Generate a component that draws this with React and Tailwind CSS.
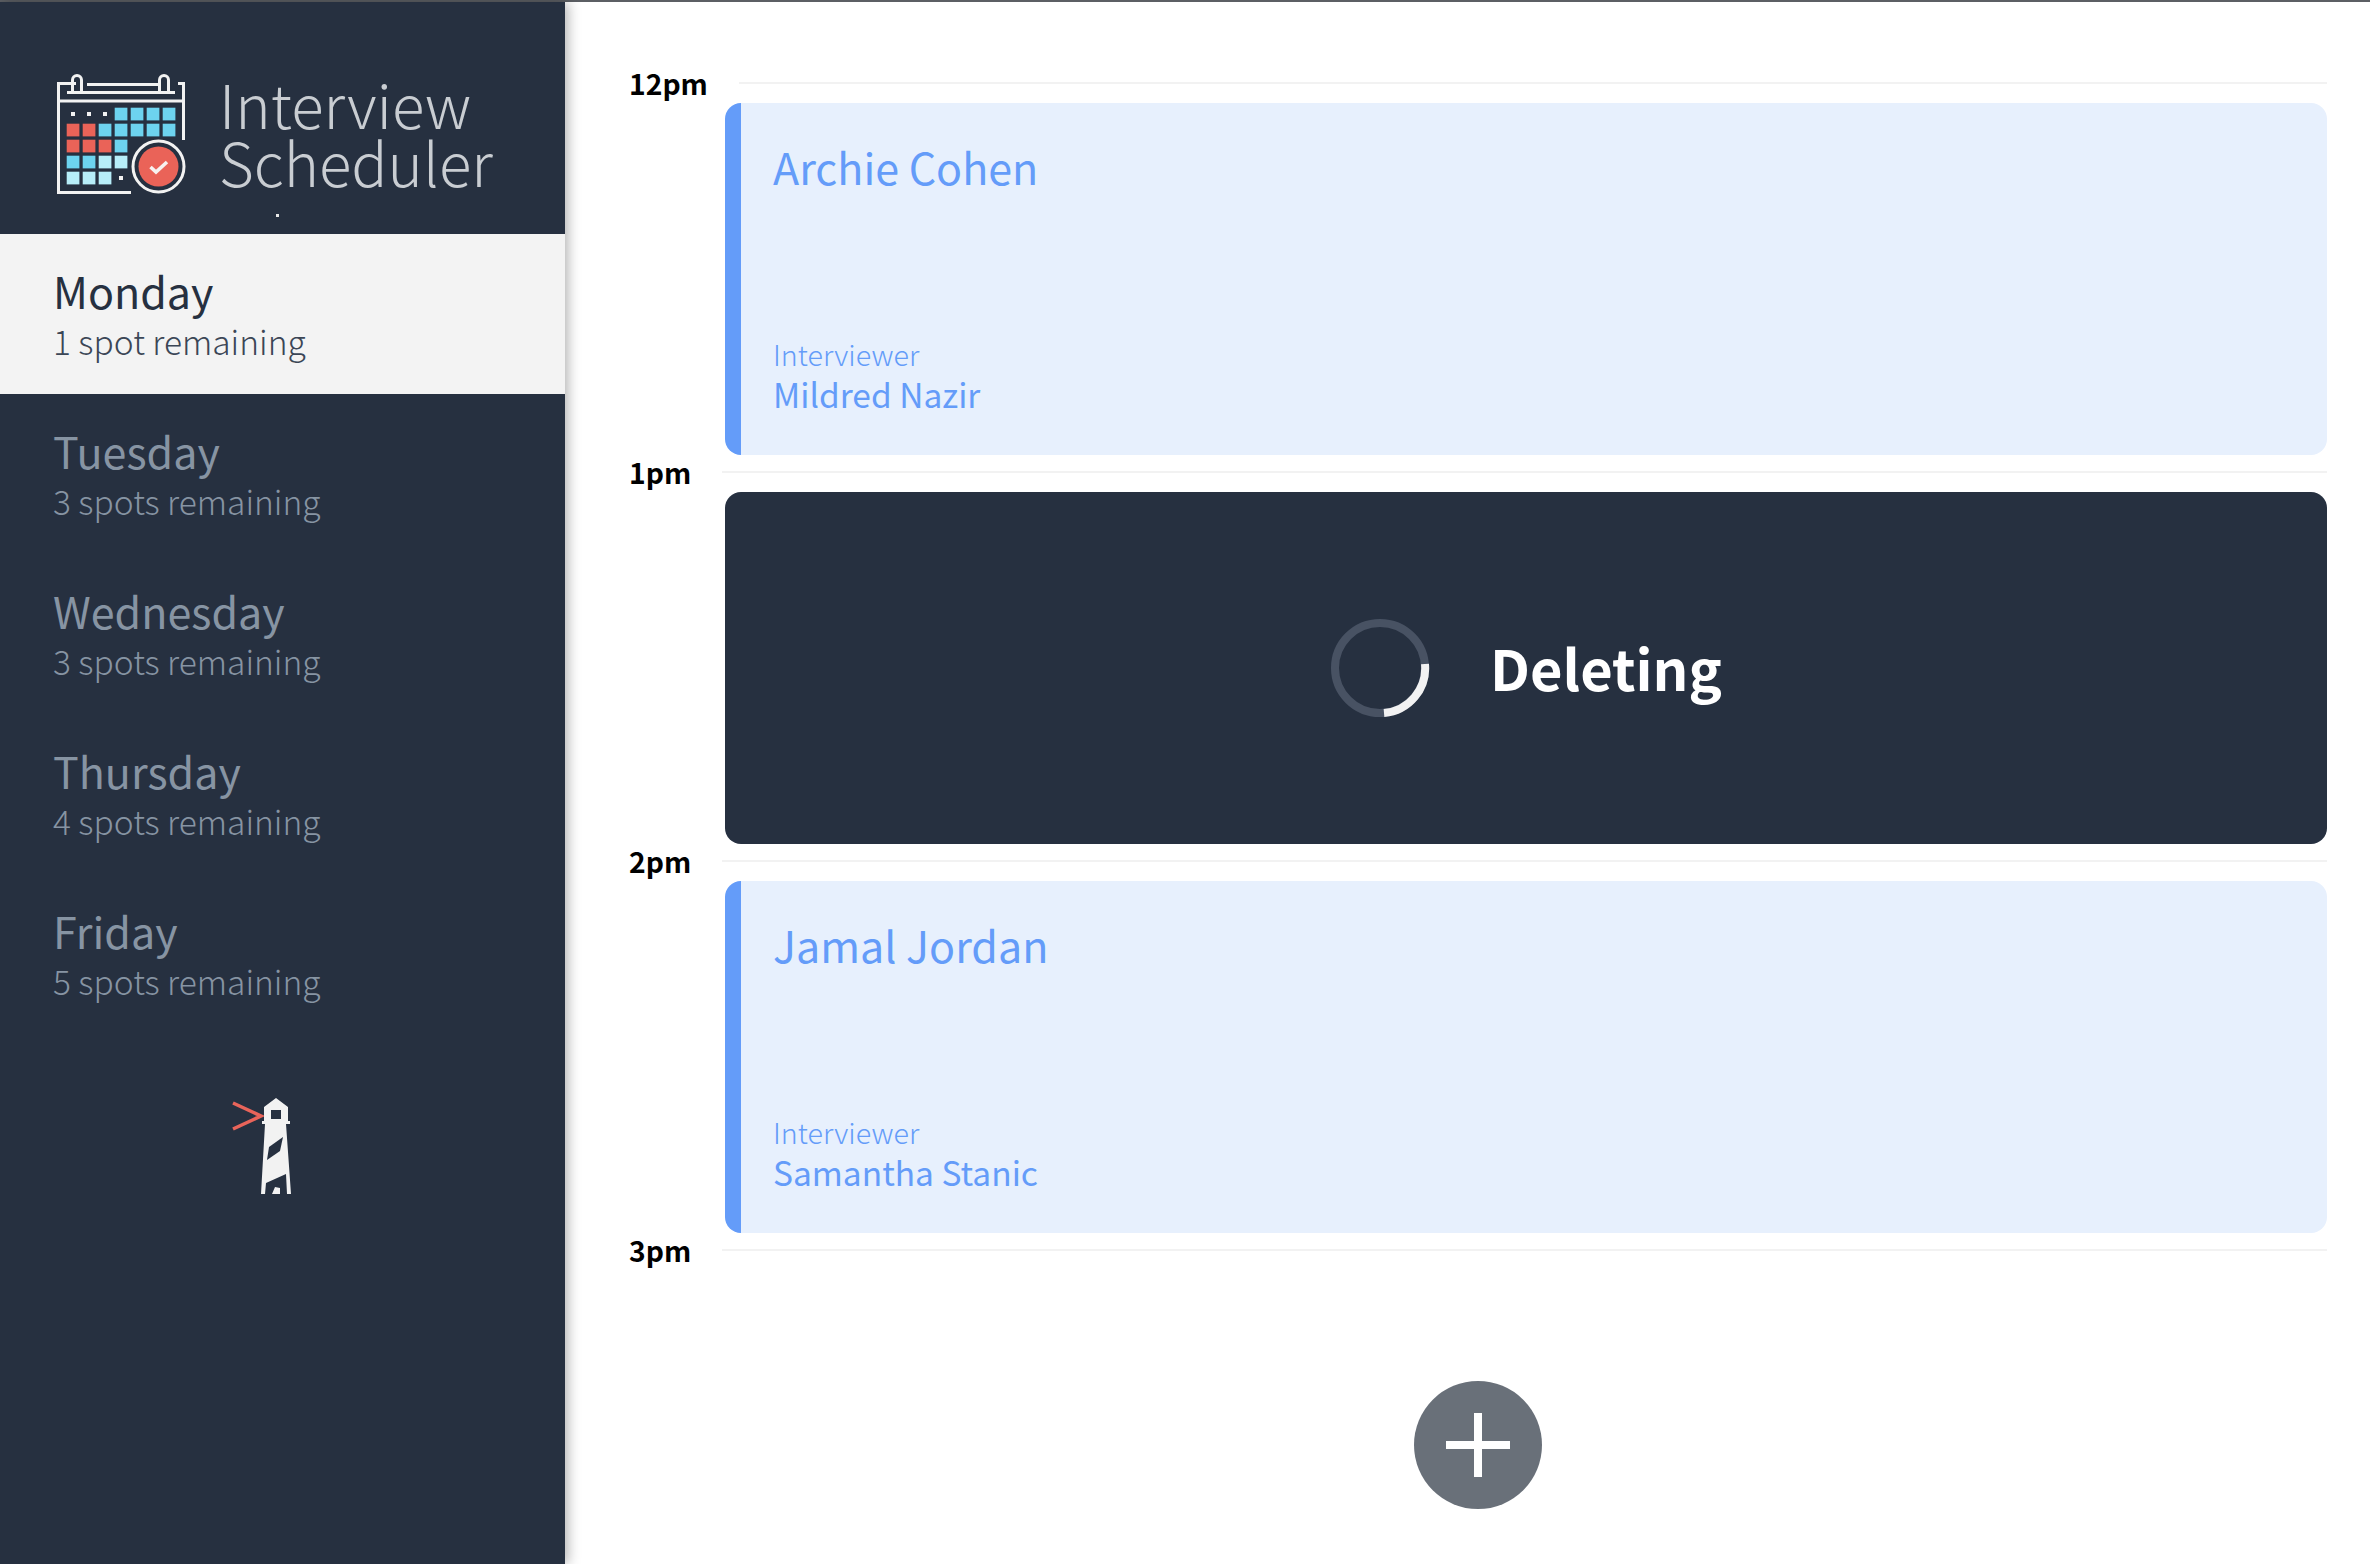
const FONT = 'font-["Noto_Sans_CJK_JP","Noto_Sans_CJK_SC",sans-serif]';

function CalendarLogo() {
  const xs = [26.7, 42.7, 58.7, 74.7, 90.7, 106.7, 122.7];
  const ys = [47.7, 63.7, 79.7, 95.7, 111.7];
  const blue = "#6dd3ef", red = "#ea6358", light = "#b7eef9";
  const cells = [
    [null, null, null, blue, blue, blue, blue],
    [red, red, blue, blue, blue, blue, blue],
    [red, red, red, blue],
    [blue, blue, light, light],
    [light, light, light, null],
  ];
  const dots = [[33, 54], [49, 54], [65, 54], [81, 118]];
  return (
    <svg viewBox="17 14 130 122" className="w-[130px] h-[122px] shrink-0">
      <g fill="none" stroke="#f2f2f2" strokeWidth="3">
        <path d="M36 23.5H18.5V132.5H91" />
        <path d="M18.5 41H143.500M143.500 80V23.500H138M47 24.500H120M27 32.500H135" />
        <path d="M32.500 31V20a4.500 4.500 0 0 1 9 0V31" />
        <path d="M119.500 31V20a4.500 4.500 0 0 1 9 0V31" />
        <circle cx="118.500" cy="106.500" r="25.500" />
      </g>
      {cells.map((row, r) =>
        row.map((c, i) => (c ? <rect key={r + "-" + i} x={xs[i]} y={ys[r]} width="12.700" height="12.700" fill={c} /> : null))
      )}
      {dots.map(([x, y]) => (
        <rect key={x + "-" + y} x={x - 2} y={y - 2} width="4" height="4" fill="#f2f2f2" />
      ))}
      <circle cx="118.500" cy="106.500" r="20" fill={red} />
      <path d="M110.500 107l5.500 5 11-10" fill="none" stroke="#f7f2f0" strokeWidth="3.600" />
    </svg>
  );
}

function Lighthouse() {
  return (
    <svg viewBox="30 25 64 102" className="w-[64px] h-[102px]">
      <path d="M33 33L61 46L33 59" fill="none" stroke="#e9645a" strokeWidth="3.500" />
      <path
        fillRule="evenodd"
        fill="#f2f2f2"
        d="M76 28L88 37V51H90V54H86L91 124H61L65 54H62V51H64V37ZM71 40V49H81V40Z"
      />
      <path fill="#263040" d="M69 77L83 67L80 81L67 90Z" />
      <path fill="#263040" d="M66 113L86 104L87 124H80V118L75 117L72 124H65Z" />
    </svg>
  );
}

function Day({ name, spots, selected }) {
  return (
    <div className={`h-[160px] pl-[53px] pt-[30px] ${selected ? "bg-[#f3f3f3] text-[#263040]" : "text-[#8794a3]"}`}>
      <div className="text-[43px] leading-[52px] font-normal">{name}</div>
      <div className={`text-[33.5px] leading-[44px] font-light mt-[3px] ${selected ? "text-[#3b4656]" : ""}`}>{spots}</div>
    </div>
  );
}

function TimeRow({ label, lineClass }) {
  return (
    <div className="flex items-center h-[2px] pl-[64px] pr-[43px]">
      <div className="text-[28.3px] font-bold text-black w-[93px] shrink-0 leading-none">{label}</div>
      <div className={`flex-1 h-[2px] bg-[#f2f2f2] ${lineClass}`} />
    </div>
  );
}

function Card({ student, interviewer }) {
  return (
    <div className="ml-[160px] mr-[43px] mt-[19px] mb-[16px] h-[352px] rounded-[16px] bg-[#e7f0fd] border-l-[16px] border-[#649cf9] text-[#649cf9] pl-[32px] flex flex-col">
      <div className="text-[43px] leading-[60px] mt-[33px] font-normal">{student}</div>
      <div className="mt-auto pb-[41px]">
        <div className="text-[28.7px] leading-[40px] font-light">Interviewer</div>
        <div className="text-[33.5px] leading-[40px] font-normal">{interviewer}</div>
      </div>
    </div>
  );
}

function Deleting() {
  return (
    <div className="ml-[160px] mr-[43px] mt-[19px] mb-[16px] h-[352px] rounded-[16px] bg-[#263040] flex items-center pl-[605px]">
      <svg viewBox="0 0 100 100" className="w-[100px] h-[100px] shrink-0">
        <circle cx="50" cy="50" r="45" fill="none" stroke="#485263" strokeWidth="8" />
        <path d="M95 46A45 45 0 0 1 54 95" fill="none" stroke="#f2f2f2" strokeWidth="8" />
      </svg>
      <div className="ml-[60px] text-[56px] leading-none font-semibold text-white pb-[3px]">Deleting</div>
    </div>
  );
}

export default function App() {
  return (
    <div className={`${FONT} w-[2370px] h-[1564px] flex flex-col overflow-hidden bg-white`}>
      <div className="h-[2px] bg-[#5c5f64] shrink-0" />
      <div className="flex flex-1 min-h-0">
        <aside className="w-[565px] shrink-0 bg-[#263040] shadow-[3px_0_12px_rgba(0,0,0,0.3)] flex flex-col z-10">
          <div className="h-[232px] pl-[57px] pt-[72px] flex gap-[32px] relative">
            <CalendarLogo />
            <div className="text-[60px] leading-[58px] font-extralight text-[#c9cdd2]">
              Interview
              <br />
              Scheduler
            </div>
            <span className="absolute left-[276px] top-[212px] w-[3px] h-[3px] bg-[#e8e8e8]" />
          </div>
          <Day name="Monday" spots="1 spot remaining" selected />
          <Day name="Tuesday" spots="3 spots remaining" />
          <Day name="Wednesday" spots="3 spots remaining" />
          <Day name="Thursday" spots="4 spots remaining" />
          <Day name="Friday" spots="5 spots remaining" />
          <div className="pl-[230px] pt-[61px]">
            <Lighthouse />
          </div>
        </aside>
        <main className="flex-1 min-w-0 pt-[80px]">
          <TimeRow label="12pm" lineClass="ml-[17px]" />
          <Card student="Archie Cohen" interviewer="Mildred Nazir" />
          <TimeRow label="1pm" />
          <Deleting />
          <TimeRow label="2pm" />
          <Card student="Jamal Jordan" interviewer="Samantha Stanic" />
          <TimeRow label="3pm" />
          <div className="ml-[849px] mt-[130px] w-[128px] h-[128px] rounded-full bg-[#697079] flex items-center justify-center">
            <svg viewBox="0 0 64 64" className="w-[64px] h-[64px]">
              <path d="M28 0h8v28h28v8H36v28h-8V36H0v-8h28z" fill="#ffffff" />
            </svg>
          </div>
        </main>
      </div>
    </div>
  );
}
